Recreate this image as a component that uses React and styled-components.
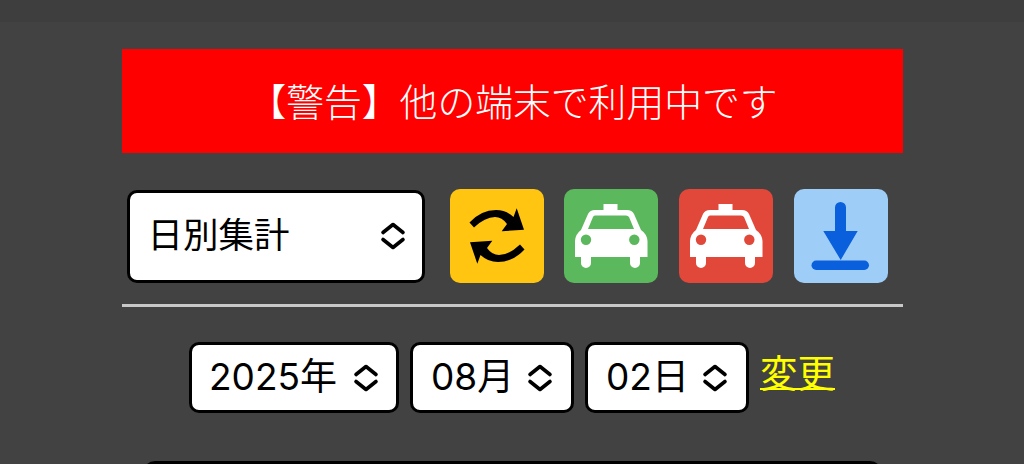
import styled, { createGlobalStyle } from "styled-components"

const GlobalStyle = createGlobalStyle`
  html, body {
    margin: 0;
    height: 100%;
    overflow: hidden;
    background: #424242;
  }
  body {
    font-family: Inter, "Noto Sans CJK JP", sans-serif;
  }
`

const TopBar = styled.div`
  height: 22px;
  background: #3e3e3e;
`

const Main = styled.main`
  width: 781px;
  margin: 0 auto;
  padding-top: 27px;
`

const Banner = styled.div`
  height: 104px;
  display: flex;
  align-items: center;
  justify-content: center;
  padding: 0 0 3px 2px;
  box-sizing: border-box;
  background: #ff0000;
  color: #fff;
  font-size: 37.8px;
  font-weight: 300;
`

const Toolbar = styled.div`
  display: flex;
  align-items: center;
  margin-top: 36px;
  padding-left: 5px;
  gap: 20.67px;
`

const SelectWrap = styled.div`
  position: relative;
  flex: none;
  width: ${(p) => p.$width}px;
  height: ${(p) => p.$height}px;
  margin-right: ${(p) => p.$gapRight || 0}px;
`

const Select = styled.select`
  appearance: none;
  width: 100%;
  height: 100%;
  box-sizing: border-box;
  border: 3px solid #000;
  border-radius: 10px;
  background: #fff;
  color: #000;
  font-family: inherit;
  font-size: ${(p) => p.$size}px;
  padding: 0 0 2px ${(p) => p.$padLeft}px;
  outline: none;
`

const Chevron = styled.svg`
  position: absolute;
  right: ${(p) => p.$right}px;
  top: 50%;
  width: 26px;
  height: 30px;
  margin-top: -15px;
  pointer-events: none;
`

const IconButton = styled.button`
  flex: none;
  width: 94px;
  height: 94px;
  padding: 0;
  border: 0;
  border-radius: 10px;
  background: ${(p) => p.$bg};
  color: ${(p) => p.$bg};

  svg {
    display: block;
    width: 94px;
    height: 94px;
  }
`

const Divider = styled.hr`
  height: 3px;
  margin: 21px 0 0;
  border: 0;
  background: #c8c8c8;
`

const DateRow = styled.div`
  display: flex;
  align-items: center;
  justify-content: center;
  gap: 11px;
  margin-top: 35px;
`

const ChangeLink = styled.a`
  color: #ffff00;
  font-size: 37.5px;
  line-height: 1;
  text-decoration: underline;
  text-decoration-thickness: 2px;
  margin-bottom: 8px;
`

const Table = styled.div`
  width: 739px;
  height: 60px;
  box-sizing: border-box;
  margin: 48px auto 0;
  border: 3px solid #000;
  border-radius: 12px;
  background: #fff;
`

function Updown({ right }) {
  return (
    <Chevron $right={right} viewBox="0 0 26 30" fill="none" stroke="#000" strokeWidth="3.6" strokeLinecap="round" strokeLinejoin="round">
      <path d="M3 11.5 L13 3.5 L23 11.5" />
      <path d="M3 18.5 L13 26.5 L23 18.5" />
    </Chevron>
  )
}

function DropDown({ width, height, padLeft, right, gapRight, size, value }) {
  return (
    <SelectWrap $width={width} $height={height} $gapRight={gapRight}>
      <Select $padLeft={padLeft} $size={size} defaultValue={value}>
        <option>{value}</option>
      </Select>
      <Updown right={right} />
    </SelectWrap>
  )
}

function TaxiIcon() {
  return (
    <svg viewBox="0 0 94 94">
      <path
        fill="#fff"
        d="M39.5 21 V15 H53.5 V21 H63 Q68 21 70 25 L77 41 Q83 45 83.5 52 V68 H76 V74 A5 5 0 0 1 66 74 V68 H27 V74 A5 5 0 0 1 17 74 V68 H11 V52 Q11.5 45 17 41 L24 25 Q26 21 31 21 Z"
      />
      <path fill="currentColor" d="M31 26.5 H62 Q64 26.5 65 28 L70 40 H24 L29 28 Q29.5 26.5 31 26.5 Z" />
      <circle fill="currentColor" cx="22" cy="50.7" r="5.2" />
      <circle fill="currentColor" cx="70.3" cy="50.7" r="5.2" />
    </svg>
  )
}

function RefreshIcon() {
  const half = "M19.5 33.5 Q31 21 46 21 Q56 21 63.5 28 L66.7 19.3 L74 40.7 L51.7 42.3 L57 35 Q52 28 45 28 Q35 28 24 38.5 Z"
  return (
    <svg viewBox="0 0 94 94">
      <path fill="#000" d={half} />
      <path fill="#000" d={half} transform="rotate(180 47 47)" />
    </svg>
  )
}

function DownloadIcon() {
  return (
    <svg viewBox="0 0 94 94">
      <path fill="#0a5fdc" d="M41 18.5 A5.5 5.5 0 0 1 52 18.5 V42 H63.7 L46.7 71 L29.3 42 H41 Z" />
      <rect fill="#0a5fdc" x="17.5" y="71.5" width="57.5" height="9.5" rx="4.7" />
    </svg>
  )
}

export default function App() {
  return (
    <>
      <GlobalStyle />
      <TopBar />
      <Main>
        <Banner>【警告】他の端末で利用中です</Banner>
        <Toolbar>
          <DropDown width={298} height={93} padLeft={18} right={19} gapRight={4.6} size={35.5} value="日別集計" />
          <IconButton $bg="#ffc510"><RefreshIcon /></IconButton>
          <IconButton $bg="#5cb85c"><TaxiIcon /></IconButton>
          <IconButton $bg="#e2483a"><TaxiIcon /></IconButton>
          <IconButton $bg="#9ecdf8"><DownloadIcon /></IconButton>
        </Toolbar>
        <Divider />
        <DateRow>
          <DropDown width={210} height={71} padLeft={17} right={20} size={37} value="2025年" />
          <DropDown width={164} height={71} padLeft={18} right={21} size={37} value="08月" />
          <DropDown width={164} height={71} padLeft={18} right={21} size={37} value="02日" />
          <ChangeLink href="#">変更</ChangeLink>
        </DateRow>
        <Table />
      </Main>
    </>
  )
}
